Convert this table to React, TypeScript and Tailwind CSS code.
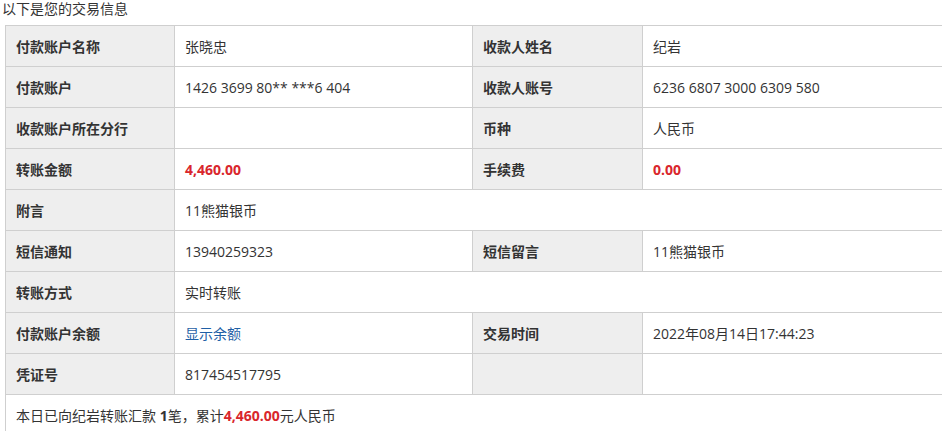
import React from "react";

const font = { fontFamily: '"Open Sans", "Noto Sans CJK SC", sans-serif' };

function Label({ children }: { children?: React.ReactNode }) {
  return (
    <div className="h-[41px] flex items-center pl-[10px] bg-[#eeeeee] border-r border-b border-[#cfcfcf] font-bold text-[14px] text-[#333333]">
      {children}
    </div>
  );
}

function Value({ children, span, className = "" }: { children?: React.ReactNode; span?: boolean; className?: string }) {
  return (
    <div
      className={`h-[41px] flex items-center pl-[10px] bg-white border-r border-b border-[#cfcfcf] text-[14px] text-[#333333] ${span ? "col-span-3" : ""} ${className}`}
    >
      {children}
    </div>
  );
}

export default function App() {
  return (
    <div className="w-[942px] h-[431px] overflow-hidden bg-white" style={font}>
      <div className="h-[25px] pt-[1px] pl-[2px] leading-[15px] text-[14px] text-[#333333]">以下是您的交易信息</div>
      <div className="ml-[5px] w-[938px] grid grid-cols-[169px_298px_170px_300px] border-l border-t border-[#cfcfcf]">
        <Label>付款账户名称</Label>
        <Value>张晓忠</Value>
        <Label>收款人姓名</Label>
        <Value>纪岩</Value>

        <Label>付款账户</Label>
        <Value>1426 3699 80** ***6 404</Value>
        <Label>收款人账号</Label>
        <Value>6236 6807 3000 6309 580</Value>

        <Label>收款账户所在分行</Label>
        <Value></Value>
        <Label>币种</Label>
        <Value>人民币</Value>

        <Label>转账金额</Label>
        <Value className="font-bold !text-[#d9262c]">4,460.00</Value>
        <Label>手续费</Label>
        <Value className="font-bold !text-[#d9262c]">0.00</Value>

        <Label>附言</Label>
        <Value span>11熊猫银币</Value>

        <Label>短信通知</Label>
        <Value>13940259323</Value>
        <Label>短信留言</Label>
        <Value>11熊猫银币</Value>

        <Label>转账方式</Label>
        <Value span>实时转账</Value>

        <Label>付款账户余额</Label>
        <Value className="!text-[#1f5fa6]">显示余额</Value>
        <Label>交易时间</Label>
        <Value>2022年08月14日17:44:23</Value>

        <Label>凭证号</Label>
        <Value>817454517795</Value>
        <Label></Label>
        <Value></Value>

        <div className="col-span-4 h-[41px] flex items-center pl-[10px] bg-white border-r border-b border-[#cfcfcf] text-[14px] text-[#333333]">
          本日已向纪岩转账汇款&nbsp;<span className="font-bold">1</span>笔，累计
          <span className="font-bold text-[#d9262c]">4,460.00</span>元人民币
        </div>
      </div>
    </div>
  );
}
